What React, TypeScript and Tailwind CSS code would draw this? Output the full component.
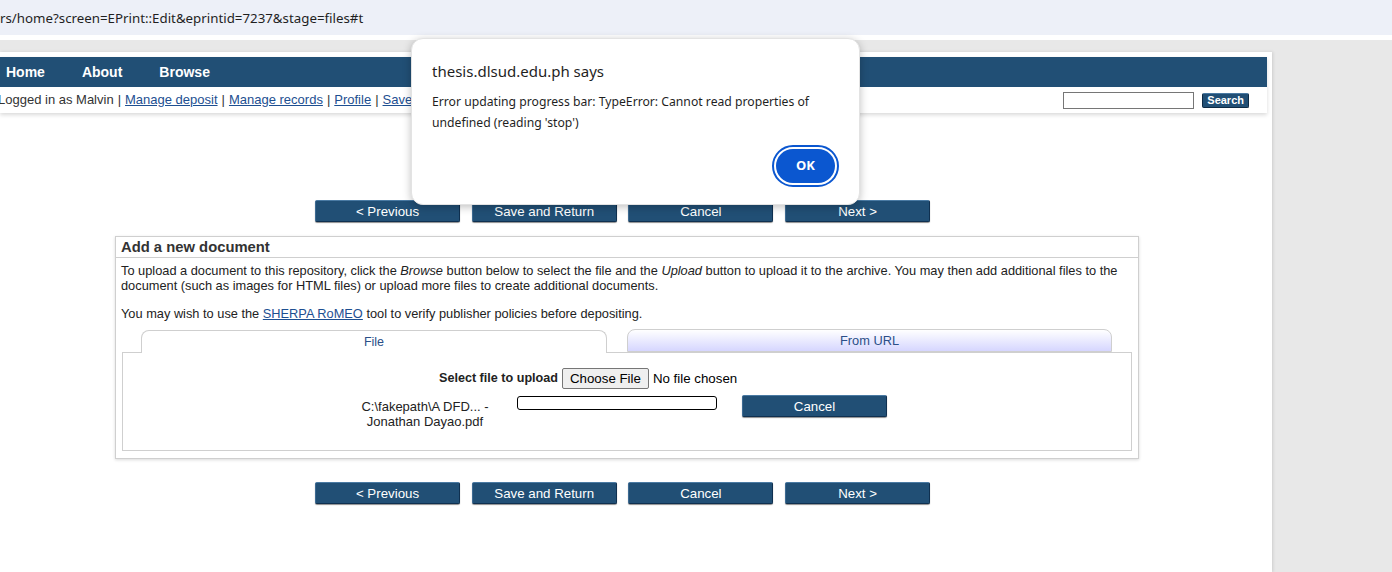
import React from 'react';

const btn =
  'h-[22px] w-[145px] rounded-[2px] border border-[#0f3050] border-t-[#4a7aa3] border-l-[#3d6a92] bg-[#214f75] text-center text-[13.3px] leading-[19px] text-white shadow-[0_1px_1px_rgba(0,0,0,0.45)]';

function StageButtons() {
  return (
    <div className="flex gap-[11.7px] pl-[315px]">
      <button type="button" className={btn}>&lt; Previous</button>
      <button type="button" className={btn}>Save and Return</button>
      <button type="button" className={btn}>Cancel</button>
      <button type="button" className={btn}>Next &gt;</button>
    </div>
  );
}

function Sep() {
  return <span className="px-[4px] text-[#333]">|</span>;
}

function UserLink({ children }: { children: React.ReactNode }) {
  return <a className="text-[#1d4f91] underline">{children}</a>;
}

function AlertDialog() {
  return (
    <div className="absolute left-[411px] top-[38px] h-[167px] w-[449px] rounded-[12px] border border-[#e3e3e3] bg-white px-[20px] pt-[22px] shadow-[0_2px_8px_rgba(0,0,0,0.25)] [font-family:'Noto_Sans','Open_Sans',sans-serif]">
      <div className="text-[15px] leading-[20px] text-[#1f1f1f]">thesis.dlsud.edu.ph says</div>
      <div className="mt-[10px] text-[12.2px] leading-[21px] text-[#1f1f1f]">
        Error updating progress bar: TypeError: Cannot read properties of
        <br />
        undefined (reading 'stop')
      </div>
      <div className="mt-[12px] flex justify-end">
        <div className="rounded-full border-2 border-[#0b57d0] p-[2px]">
          <button
            type="button"
            className="h-[34px] w-[59px] rounded-full bg-[#0b57d0] text-[13px] font-bold text-white"
          >
            OK
          </button>
        </div>
      </div>
    </div>
  );
}

export default function App() {
  return (
    <div className="relative h-[572px] w-[1392px] overflow-hidden bg-[#e8e8e8] [font-family:'Liberation_Sans',Arial,sans-serif]">
      {/* browser address bar */}
      <div className="h-[35px] bg-[#edf0f8] pt-[8px] text-[13.3px] leading-[20px] text-[#1f1f1f] [font-family:'Noto_Sans','Open_Sans',sans-serif]">
        rs/home?screen=EPrint::Edit&amp;eprintid=7237&amp;stage=files#t
      </div>
      <div className="h-[5px] bg-white" />

      <div className="flex">
        <div className="mt-[12px] h-[520px] w-[1272px] bg-white pt-[5px] shadow-[1px_0_3px_rgba(0,0,0,0.12)]">
          {/* header */}
          <div className="w-[1267px] shadow-[0_2px_4px_rgba(0,0,0,0.15)]">
            <div className="flex h-[30px] items-center bg-[#214f75] pl-[6px] text-[14px] font-bold text-white">
              <span>Home</span>
              <span className="ml-[37px]">About</span>
              <span className="ml-[37px]">Browse</span>
            </div>
            <div className="flex h-[26px] items-center justify-between pr-[18px] text-[13px] text-[#333]">
              <div className="-ml-[2px] whitespace-nowrap">
                Logged in as Malvin
                <Sep />
                <UserLink>Manage deposit</UserLink>
                <Sep />
                <UserLink>Manage records</UserLink>
                <Sep />
                <UserLink>Profile</UserLink>
                <Sep />
                <UserLink>Saved searches</UserLink>
                <Sep />
                <UserLink>Logout</UserLink>
              </div>
              <div className="flex items-center">
                <div className="h-[17px] w-[131px] border border-[#767676] bg-white" />
                <button
                  type="button"
                  className="ml-[8px] h-[15px] rounded-[2px] border border-[#0d2a44] border-t-[#4a7aa3] bg-[#214f75] px-[4px] text-[11px] font-bold leading-[12px] text-white"
                >
                  Search
                </button>
              </div>
            </div>
          </div>

          <div className="h-[87px]" />
          <StageButtons />

          {/* upload box */}
          <div className="ml-[115px] mt-[14px] w-[1024px] border border-[#cfcfcf] shadow-[0_1px_3px_rgba(0,0,0,0.15)]">
            <div className="h-[21px] border-b border-[#cfcfcf] pl-[5px] text-[14.8px] font-bold leading-[20px] text-[#333]">
              Add a new document
            </div>
            <div className="px-[5px] pt-[5px] text-[12.8px] leading-[15px] text-[#222]">
              <p>
                To upload a document to this repository, click the <i>Browse</i> button below to select the
                file and the <i>Upload</i> button to upload it to the archive. You may then add additional
                files to the document (such as images for HTML files) or upload more files to create
                additional documents.
              </p>
              <p className="mt-[13px]">
                You may wish to use the <a className="text-[#1d4f91] underline">SHERPA RoMEO</a> tool to
                verify publisher policies before depositing.
              </p>
            </div>

            <div className="mx-[6px] mb-[7px] mt-[9px]">
              <div className="flex h-[22px] items-end">
                <div className="relative z-10 -mb-px ml-[19px] flex h-[23px] w-[466px] items-center justify-center rounded-t-[8px] border border-b-0 border-[#cfcfcf] bg-white text-[12.5px] text-[#2b4f88]">
                  File
                </div>
                <div className="ml-[20px] flex h-[23px] w-[485px] items-center justify-center rounded-t-[8px] border border-[#cfcfcf] bg-gradient-to-b from-white to-[#d6d6ff] text-[12.8px] text-[#2b4f88]">
                  From URL
                </div>
              </div>
              <div className="h-[99px] border border-[#cfcfcf] bg-white">
                <div className="mt-[15px] flex items-center pl-[316px] text-[12.6px] text-[#222]">
                  <span className="font-bold">Select file to upload</span>
                  <span className="ml-[4px] h-[21px] rounded-[2px] border border-[#767676] bg-[#efefef] px-[7px] text-[13.3px] leading-[19px] text-black">
                    Choose File
                  </span>
                  <span className="ml-[4px] text-[13.3px] text-black">No file chosen</span>
                </div>
                <div className="mt-[10px] flex items-start">
                  <div className="ml-[227px] w-[150px] text-center text-[13px] leading-[15px] text-[#222]">
                    C:\fakepath\A DFD... -<br />
                    Jonathan Dayao.pdf
                  </div>
                  <div className="ml-[17px] mt-[-3px] h-[14px] w-[200px] rounded-[3px] border border-black bg-white" />
                  <button type="button" className={btn + ' ml-[25px] mt-[-4px]'}>
                    Cancel
                  </button>
                </div>
              </div>
            </div>
          </div>

          <div className="h-[23px]" />
          <StageButtons />
        </div>
      </div>

      <AlertDialog />
    </div>
  );
}
